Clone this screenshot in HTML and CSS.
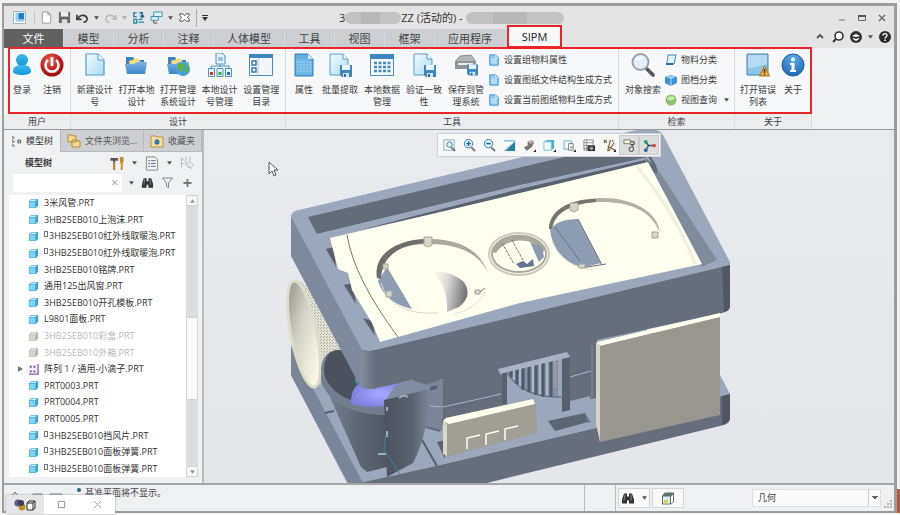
FILE: index.html
```html
<!DOCTYPE html>
<html lang="zh">
<head>
<meta charset="utf-8">
<title>SIPM</title>
<link rel="stylesheet" href="styles.css">
</head>
<body>
<svg class="defs" aria-hidden="true">
  <defs>
    <linearGradient id="gBlue" x1="0" y1="0" x2="1" y2="1"><stop offset="0" stop-color="#f4fbfe"/><stop offset="1" stop-color="#a9dbf3"/></linearGradient>
    <linearGradient id="gFolder" x1="0" y1="0" x2="0" y2="1"><stop offset="0" stop-color="#7db2e4"/><stop offset="1" stop-color="#3f86cc"/></linearGradient>
    <radialGradient id="gRed" cx=".4" cy=".3" r=".8"><stop offset="0" stop-color="#ea5a50"/><stop offset=".6" stop-color="#c01818"/><stop offset="1" stop-color="#8d0d0d"/></radialGradient>
    <radialGradient id="gInfo" cx=".5" cy=".2" r=".9"><stop offset="0" stop-color="#5aa9ea"/><stop offset="1" stop-color="#1763b4"/></radialGradient>
    <linearGradient id="gUser" x1="0" y1="0" x2="0" y2="1"><stop offset="0" stop-color="#37bdf0"/><stop offset="1" stop-color="#1597d6"/></linearGradient>
  </defs>
  <symbol id="cube" viewBox="0 0 12 12"><path d="M1 3.500 3.500 1H11v7.500L8.500 11H1z" fill="#3b9fd0"/><path d="M1.500 3.800H8v6.700H1.500z" fill="#7fd3f3"/><path d="M2 3.200 3.800 1.500h6L8.300 3.200z" fill="#c4eefb"/></symbol>
  <symbol id="cubeoff" viewBox="0 0 12 12"><path d="M1 3.500 3.500 1H11v7.500L8.500 11H1z" fill="#b9b7ad"/><path d="M1.500 3.800H8v6.700H1.500z" fill="#d8d6cc"/><path d="M2 3.200 3.800 1.500h6L8.300 3.200z" fill="#eceae4"/></symbol>
  <symbol id="page" viewBox="0 0 24 24"><path d="M3 1h12l6 6v15H3z" fill="url(#gBlue)" stroke="#5a9cc4" stroke-width="1.200"/><path d="M15 1v6h6" fill="#fff" stroke="#5a9cc4"/></symbol>
  <symbol id="disk" viewBox="0 0 12 12"><path d="M0 0h12v12H2L0 10z" fill="#3c86bd"/><path d="M2 0h8v5H2z" fill="#e8f4fb"/><path d="M3 8h6v4H3z" fill="#d4e6f2"/><path d="M4 9h2v3H4z" fill="#2b6ea6"/></symbol>
  <symbol id="folder" viewBox="0 0 24 24"><path d="M2 4h7l2 3h9v6H2z" fill="#3f83c4"/><path d="m5 8 9-3 4 6-12 2z" fill="#f6dd78"/><path d="M1 11h9l3-2h10l-2 12H3z" fill="url(#gFolder)"/></symbol>
  <symbol id="mini" viewBox="0 0 12 14"><path d="M1 1h7l3 3v9H1z" fill="#8fcdf4" stroke="#3c8ecb"/><path d="M8 1v3h3M3 6h6M3 8h6M3 10h6" fill="none" stroke="#d8f0fd"/></symbol>
  <symbol id="binoc" viewBox="0 0 14 12"><path d="M3 1h3v3h2V1h3l2 6v4H8V8H6v3H1V7z" fill="#333"/><path d="m4 2-1 6M10 2v6" stroke="#888"/></symbol>
  <symbol id="caret" viewBox="0 0 6 4"><path d="M0 0h6L3 4z" fill="#555"/></symbol>
</svg>

<div class="window">
  <header class="titlebar">
    <div class="quick">
      <button class="qb app" aria-label="窗口"><svg viewBox="0 0 14 14"><path d="M.5.5h13v13H.5z" fill="#fff" stroke="#9ab"/><path d="M3 2h9v9H3z" fill="#1784c7"/><path d="M3 2h3v9H3zM3 9h9v2H3z" fill="#9bd0ee"/></svg></button>
      <button class="qb" aria-label="新建"><svg viewBox="0 0 14 14"><path d="M2.500 1h6l3 3v9h-9z" fill="#fff" stroke="#999"/><path d="M8.500 1v3h3" fill="none" stroke="#888"/></svg></button>
      <button class="qb" aria-label="保存"><svg viewBox="0 0 14 14"><path d="M1 1h12v12H1z" fill="#666"/><path d="M3 1h8v5H3z" fill="#eee"/><path d="M4 9h6v4H4z" fill="#ddd"/></svg></button>
      <button class="qb" aria-label="撤消"><svg viewBox="0 0 14 14"><path d="M2 8c3-5 9-4 10 0 .5 3-2 4-4 4M1 4v5h5" fill="none" stroke="#3c3c3c" stroke-width="1.800"/></svg></button>
      <svg class="caret"><use href="#caret"/></svg>
      <button class="qb faded" aria-label="重做"><svg viewBox="0 0 14 14"><path d="M12 8c-3-5-9-4-10 0-.5 3 2 4 4 4M13 4v5H8" fill="none" stroke="#777" stroke-width="1.600"/></svg></button>
      <svg class="caret faded"><use href="#caret"/></svg>
      <button class="qb" aria-label="重新生成"><svg viewBox="0 0 14 14"><path d="M2 1v6M2 2h3M2 6h3M2 9h3v4H2zM7 12h6M7 9h4" fill="none" stroke="#2485aa" stroke-width="1.500"/><path d="M8 2h3v5M9 5l2 2 2-2" fill="none" stroke="#1d6d94" stroke-width="1.600"/></svg></button>
      <button class="qb" aria-label="窗口切换"><svg viewBox="0 0 14 14"><path d="M4 1h9v5H4zM1 6h8v4H1z" fill="#dff1fa" stroke="#3d8cae"/><path d="M4 10v3h4" fill="none" stroke="#444"/></svg></button>
      <svg class="caret"><use href="#caret"/></svg>
      <button class="qb" aria-label="关闭"><svg viewBox="0 0 14 14"><path d="M2 3h3l2 2 2-2h3v2l-2 2 2 2v2H9L7 9l-2 2H2V9l2-2-2-2z" fill="#fff" stroke="#444"/></svg></button>
      <span class="qsep"></span>
      <svg class="caret more" viewBox="0 0 6 6"><path d="M0 0h6v1H0zM0 2h6L3 6z" fill="#333"/></svg>
    </div>
    <div class="caption"><span>3</span><i class="mask short"></i><span>ZZ (活动的) -</span><i class="mask long"></i></div>
    <div class="wincontrols">
      <button aria-label="最小化"><svg viewBox="0 0 10 10"><path d="M2 7h6" stroke="#777"/></svg></button>
      <button aria-label="最大化"><svg viewBox="0 0 10 10"><path d="M1.500 2.500h7v5h-7z" fill="none" stroke="#666"/><path d="M1 2h8v2H1z" fill="#555"/></svg></button>
      <button aria-label="关闭窗口"><svg viewBox="0 0 10 10"><path d="m2 2 6 6M8 2 2 8" stroke="#666" stroke-width="1.400"/></svg></button>
    </div>
  </header>

  <nav class="tabs">
    <div class="tablist">
      <button class="tab file">文件</button><button class="tab w50">模型</button><button class="tab w50">分析</button><button class="tab w50">注释</button><button class="tab w71">人体模型</button><button class="tab w50">工具</button><button class="tab w50">视图</button><button class="tab w50">框架</button><button class="tab w71">应用程序</button>
    </div>
    <button class="tab current">SIPM</button>
    <div class="tools">
      <button aria-label="折叠"><svg viewBox="0 0 12 12"><path d="m3 7 3-3 3 3" fill="none" stroke="#555" stroke-width="1.800"/></svg></button>
      <button aria-label="搜索"><svg viewBox="0 0 12 12"><circle cx="7" cy="5" r="4" fill="#fff" stroke="#333" stroke-width="1.600"/><path d="m4 8-3 3" stroke="#333" stroke-width="2"/></svg></button>
      <button aria-label="学习"><svg viewBox="0 0 12 12"><circle cx="6" cy="6" r="6" fill="#333"/><path d="m2 5 4-2 4 2-4 1zM3 7l3 1 3-1v1L6 10 3 8z" fill="#fff"/></svg></button>
      <svg class="caret"><use href="#caret"/></svg>
      <button aria-label="帮助"><svg viewBox="0 0 12 12"><circle cx="6" cy="6" r="6" fill="#2c2c2c"/><path d="M4 4.500C4 2 8 2 8 4.500 8 6 6 6 6 7.500" fill="none" stroke="#fff" stroke-width="1.400"/><path d="M5.300 8.500h1.500V10H5.300z" fill="#fff"/></svg></button>
    </div>
  </nav>

  <section class="ribbon">
    <div class="group">
      <div class="items">
        <button class="big narrow"><svg viewBox="0 0 24 24"><circle cx="12" cy="7" r="6" fill="url(#gUser)"/><path d="M3 19c0-5 3-6 6-7h6c3 1 6 2 6 7-1 4-17 4-18 0z" fill="url(#gUser)"/></svg><span>登录</span></button>
        <button class="big narrow"><svg viewBox="0 0 24 24"><circle cx="12" cy="12" r="11.500" fill="url(#gRed)"/><path d="M8 7a6.500 6.500 0 1 0 8 0" fill="none" stroke="#fff" stroke-width="2.600"/><path d="M12 4v9" stroke="#fff" stroke-width="2.800"/></svg><span>注销</span></button>
      </div>
      <h2>用户</h2>
    </div>
    <div class="group">
      <div class="items">
        <button class="big"><svg><use href="#page"/></svg><span>新建设计号</span></button>
        <button class="big"><svg><use href="#folder"/></svg><span>打开本地设计</span></button>
        <button class="big"><svg viewBox="0 0 24 24"><use href="#folder"/><circle cx="17" cy="16" r="7" fill="#4a9ee0"/><path d="m13 11 5-1 2 3-3 2v4l-3-1-3-4zM20 15l3-1-1 5-3 2z" fill="#5cb531"/></svg><span>打开管理系统设计</span></button>
        <button class="big"><svg viewBox="0 0 24 24"><path d="M8 0h6l3 3v8H8z" fill="#e6f5fc" stroke="#4b93bd"/><path d="M10 5h5M10 7h5M12 11v3M3 15v-2h18v2" fill="none" stroke="#4b93bd"/><path d="M.5 15.500h6v8h-6zM9 15.500h6v8H9zM17.500 15.500h6v8h-6z" fill="#e9f5fb" stroke="#4b93bd"/><path d="M2 19h3v3H2z" fill="#d33"/><path d="M10.500 19h3v3h-3z" fill="#3a3"/><path d="M19 19h3v3h-3z" fill="#36c"/></svg><span>本地设计号管理</span></button>
        <button class="big"><svg viewBox="0 0 24 24"><path d="M.5 1.500h23v21H.5z" fill="#fff" stroke="#4c8cba"/><path d="M0 1h24v4H0z" fill="#3f87c0"/><path d="M9 5v17h14V5z" fill="#f3f6f8"/><path d="M3 8h4v4H3zM3 15h4v4H3z" fill="#fff" stroke="#2f78b4" stroke-width="1.500"/><path d="M9 5v17" stroke="#a8c4d8"/></svg><span>设置管理目录</span></button>
      </div>
      <h2>设计</h2>
    </div>
    <div class="group wide">
      <div class="items">
        <button class="big narrow"><svg viewBox="0 0 24 24"><path d="M3 1h13l5 5v17H3z" fill="#62afe2" stroke="#2f7db8"/><path d="M16 1v5h5" fill="#d5ecf9"/><path d="M6 6v15M9 6v15M12 6v15M15 6v15M18 8v13M4 9h16M4 12h16M4 15h16M4 18h16" stroke="#a7d6f3" stroke-width=".7"/></svg><span>属性</span></button>
        <button class="big"><svg viewBox="0 0 24 24"><path d="M2 1h13l5 5v16H2z" fill="url(#gBlue)" stroke="#5a9cc4"/><path d="M15 1v5h5" fill="#fff" stroke="#5a9cc4"/><use href="#disk" x="12" y="12" width="12" height="12"/></svg><span>批量提取</span></button>
        <button class="big"><svg viewBox="0 0 24 24"><path d="M.5 1.500h23v21H.5z" fill="#f3fafe" stroke="#4c8cba"/><path d="M0 1h24v5H0z" fill="#3f87c0"/><path d="M4 10h17M4 14h17M4 18h17" stroke="#4689bb" stroke-width="2.600" stroke-dasharray="3 1.500"/></svg><span>本地数据管理</span></button>
        <button class="big"><svg viewBox="0 0 24 24"><path d="M2 1h13l5 5v16H2z" fill="url(#gBlue)" stroke="#5a9cc4"/><path d="M15 1v5h5" fill="#fff" stroke="#5a9cc4"/><use href="#disk" x="12" y="12" width="12" height="12"/></svg><span>验证一致性</span></button>
        <button class="big"><svg viewBox="0 0 24 24"><path d="m6 3 11-1 5 7H1z" fill="#b5b7b9" stroke="#8b8d8f"/><path d="M1 8h21v8H1z" fill="#929598"/><path d="M4 11h15" stroke="#ececec" stroke-width="2"/><use href="#disk" x="13" y="11" width="11" height="12"/></svg><span>保存到管理系统</span></button>
        <div class="stack">
          <button class="small"><svg><use href="#mini"/></svg>设置组物料属性</button>
          <button class="small"><svg><use href="#mini"/></svg>设置图纸文件结构生成方式</button>
          <button class="small"><svg><use href="#mini"/></svg>设置当前图纸物料生成方式</button>
        </div>
      </div>
      <h2>工具</h2>
    </div>
    <div class="group search">
      <div class="items">
        <button class="big"><svg viewBox="0 0 24 24"><path d="m15 15 7 7" stroke="#555" stroke-width="3.600" stroke-linecap="round"/><circle cx="9.500" cy="9" r="8" fill="#e3eefa" stroke="#9aa0a8" stroke-width="2"/><path d="M5 8c1-3 4-4 7-3" fill="none" stroke="#fff" stroke-width="2"/></svg><span>对象搜索</span></button>
        <div class="stack">
          <button class="small"><svg viewBox="0 0 12 12"><path d="M3 1h8L9 10H1c1 0 1-1 2-9z" fill="#e2f3fc" stroke="#3588bd"/><path d="M1 10h7" stroke="#266d9c" stroke-width="2"/></svg>物料分类</button>
          <button class="small"><svg viewBox="0 0 12 12"><path d="m0 3 6-2 6 2v6l-6 3-6-3z" fill="#3c93d4"/><path d="m1 3 5-1.500L11 3 6 5z" fill="#9dd1f5"/><path d="M6 5v7" stroke="#bfe2fa"/></svg>图档分类</button>
          <button class="small"><svg viewBox="0 0 12 12"><circle cx="6" cy="6" r="5.500" fill="#8bc76a"/><path d="M2 5c1-3 5-4 8-1L6 7z" fill="#cdebb7"/></svg>视图查询<svg class="caret"><use href="#caret"/></svg></button>
        </div>
      </div>
      <h2>检索</h2>
    </div>
    <div class="group about">
      <div class="items">
        <button class="big"><svg viewBox="0 0 24 24"><path d="M1 1h21v21H1z" fill="#8fc4ea" stroke="#4a82ac"/><path d="M2 2h19v9L2 16z" fill="#b5daf3"/><path d="m18.500 13 5 10h-10z" fill="#f0b22c" stroke="#a87416"/><path d="M18.500 16v4M18.500 21v1" stroke="#333" stroke-width="1.500"/></svg><span>打开错误列表</span></button>
        <button class="big narrow"><svg viewBox="0 0 24 24"><circle cx="12" cy="12" r="11" fill="url(#gInfo)" stroke="#1f5e9d"/><circle cx="12" cy="6.500" r="2" fill="#fff"/><path d="M9 10h4.500v7H15v2H9v-2h1.500v-5H9z" fill="#fff"/></svg><span>关于</span></button>
      </div>
      <h2>关于</h2>
    </div>
    <div class="highlight"></div>
  </section>

  <main class="work">
    <aside class="side">
      <div class="sidetabs">
        <button class="on"><svg viewBox="0 0 12 12"><path d="M2 0v12M2 2h3M2 6h3M2 11h3" stroke="#555" stroke-dasharray="2 1"/><path d="M7.500 4.500h3v3h-3z" fill="none" stroke="#444"/></svg>模型树</button>
        <button><svg class="lg" viewBox="0 0 14 14"><path d="M1 1h4l1 1h3v6H1zM5 6h4l1 1h3v6H5z" fill="#f5d98c" stroke="#b3893a"/></svg>文件夹浏览...</button>
        <button><svg class="lg" viewBox="0 0 14 14"><path d="M1 2h5l1 1h6v10H1z" fill="#f5dea0" stroke="#b89344"/><path d="M4 8h6M7 5v6M5 6l4 4M9 6l-4 4" stroke="#2676a8" stroke-width="1.200"/></svg>收藏夹</button>
      </div>
      <div class="treehead">
        <h3>模型树</h3>
        <button aria-label="设置"><svg viewBox="0 0 14 16"><path d="M0 2h8v3H5v10H3V5H0z" fill="#555"/><path d="M3 7h2v8H3z" fill="#c88a35"/><path d="M10 1v5l1 2v7h2V8l1-2V1z" fill="#c88a35"/></svg></button>
        <svg class="caret"><use href="#caret"/></svg>
        <button aria-label="显示"><svg viewBox="0 0 14 16"><path d="M1 1h9l3 3v11H1z" fill="#f2f2f2" stroke="#858585"/><path d="M3 5h2M6 5h5M3 8h2M6 8h5M3 11h2M6 11h5" stroke="#567"/></svg></button>
        <svg class="caret"><use href="#caret"/></svg>
        <button class="faded" aria-label="隐藏"><svg viewBox="0 0 14 16"><path d="M1 1v12M1 4h3M1 8h3M6 1v5M10 1v5M5 9c3-3 6-3 9 1-3 3-6 3-9-1M4 5l9 10" fill="none" stroke="#666"/></svg></button>
      </div>
      <div class="find">
        <label class="field"><input type="text" aria-label="搜索模型树"><span>×</span></label>
        <svg class="caret"><use href="#caret"/></svg>
        <button aria-label="查找"><svg><use href="#binoc"/></svg></button>
        <button aria-label="过滤"><svg viewBox="0 0 12 12"><path d="M1 1h10L7 6v5L5 9V6z" fill="none" stroke="#888"/></svg></button>
        <button aria-label="添加"><svg viewBox="0 0 12 12"><path d="M6 2v8M2 6h8" stroke="#777" stroke-width="1.800"/></svg></button>
      </div>
      <div class="tree">
        <ul>
          <li><svg><use href="#cube"/></svg>3米风管.PRT</li>
          <li><svg><use href="#cube"/></svg>3HB25EB010上泡沫.PRT</li>
          <li><svg><use href="#cube"/></svg><i></i>3HB25EB010红外线取暖泡.PRT</li>
          <li><svg><use href="#cube"/></svg><i></i>3HB25EB010红外线取暖泡.PRT</li>
          <li><svg><use href="#cube"/></svg>3HB25EB010铭牌.PRT</li>
          <li><svg><use href="#cube"/></svg>通用125出风窗.PRT</li>
          <li><svg><use href="#cube"/></svg>3HB25EB010开孔模板.PRT</li>
          <li><svg><use href="#cube"/></svg>L9801面板.PRT</li>
          <li class="off"><svg><use href="#cubeoff"/></svg>3HB25EB010彩盒.PRT</li>
          <li class="off"><svg><use href="#cubeoff"/></svg>3HB25EB010外箱.PRT</li>
          <li class="parent"><b></b><svg viewBox="0 0 12 12"><path d="M1 1h10v10H1z" fill="#f6effa"/><path d="M11 0v11H1" fill="none" stroke="#8a62ab" stroke-width="1.500"/><path d="M2 2h2v2H2zM6 2h2v2H6zM2 7h2v2H2zM6 7h2v2H6z" fill="#6d4792"/></svg>阵列 1 / 通用-小滴子.PRT</li>
          <li><svg><use href="#cube"/></svg>PRT0003.PRT</li>
          <li><svg><use href="#cube"/></svg>PRT0004.PRT</li>
          <li><svg><use href="#cube"/></svg>PRT0005.PRT</li>
          <li><svg><use href="#cube"/></svg><i></i>3HB25EB010挡风片.PRT</li>
          <li><svg><use href="#cube"/></svg><i></i>3HB25EB010面板弹簧.PRT</li>
          <li><svg><use href="#cube"/></svg><i></i>3HB25EB010面板弹簧.PRT</li>
        </ul>
        <div class="scroll">
          <button aria-label="向上"><svg class="caret up"><use href="#caret"/></svg></button>
          <div class="track"></div><div class="thumb"></div><div class="track low"></div>
          <button aria-label="向下"><svg class="caret"><use href="#caret"/></svg></button>
        </div>
      </div>
    </aside>

    <div class="viewport">
      <svg class="model" viewBox="204 130 690 353" role="img" aria-label="三维模型">
        <defs>
          <linearGradient id="dome" x1="0" y1="0" x2="1" y2=".2"><stop offset="0" stop-color="#fffff0"/><stop offset=".45" stop-color="#dadad6"/><stop offset="1" stop-color="#77777b"/></linearGradient>
          <linearGradient id="tube" x1="0" y1="0" x2=".5" y2="1"><stop offset="0" stop-color="#85847e"/><stop offset=".5" stop-color="#d2d1c5"/><stop offset="1" stop-color="#fbfae9"/></linearGradient>
          <linearGradient id="bucket" x1="0" y1="0" x2="1" y2="0"><stop offset="0" stop-color="#7b8697"/><stop offset=".5" stop-color="#5d6673"/><stop offset="1" stop-color="#4e5560"/></linearGradient>
          <linearGradient id="flap" x1="0" y1="0" x2="1" y2="0"><stop offset="0" stop-color="#4d545f"/><stop offset=".6" stop-color="#59616e"/><stop offset="1" stop-color="#7d8898"/></linearGradient>
          <radialGradient id="violet"><stop offset="0" stop-color="#a6aaff"/><stop offset="1" stop-color="#7f83e0"/></radialGradient>
          <linearGradient id="corner" x1="0" y1="0" x2="1" y2="0"><stop offset="0" stop-color="#858f9f"/><stop offset="1" stop-color="#666e7c"/></linearGradient>
          <pattern id="mesh" width="3" height="3" patternUnits="userSpaceOnUse"><path d="M0 0h3v3H0z" fill="#e3e2d4"/><path d="M0 0h1v1H0zM2 1h1v1H2z" fill="#aaa99d"/></pattern>
        </defs>
        <!-- base tray -->
        <path d="M291 345 308 340 600 300 720 375 730 394 600 427 440 465 362 483H347L291 375z" fill="#9ba8bc"/>
        <path d="M291 347 291 375 348 483H363z" fill="#7a8697"/>
        <path d="M360 483 440 465 600 427 730 394V418Q730 423 724 425L487 483z" fill="#666e7c"/>
        <path d="M722 396 730 394V418Q730 423 722 425z" fill="#505763"/>
        <path d="M325 413 334 411M422 440 437 466" stroke="#55606f" stroke-width="2"/>
        <!-- duct -->
        <path d="M294 281Q305 279 316 300L345 352 326 360 320 386z" fill="url(#mesh)"/>
        <ellipse cx="304" cy="334" rx="13" ry="54" transform="rotate(-11 304 334)" fill="url(#tube)" stroke="#dddccb" stroke-width="3"/>
        <!-- body behind the parts -->
        <path d="M412 375 597 330V398L500 414 443 423 440 432 425 428z" fill="#666e7c"/>
        <path d="M425 385 442 379V430L425 426z" fill="#7b8595"/>
        <path d="M430 406 443 407 501 394M570 377 591 371" fill="none" stroke="#a9b5c6"/>
        <path d="M442 379V419M592 345V398" stroke="#8692a3"/>
        <!-- bucket -->
        <path d="M321 371C321 350 338 347 347 352L395 395 390 410 387 467 367 472 361 467 326 388z" fill="url(#bucket)"/>
        <path d="M324 371C324 352 335 348 344 351L356 372V392L351 402C334 392 324 382 324 371z" fill="#4b525e"/>
        <path d="M321 371C325 392 352 406 389 406V415C352 416 326 401 321 380z" fill="#727d8d"/>
        <path d="M351 404C351 388 356 381 375 381L408 383Q416 390 409 397L387 406Q366 408 351 404z" fill="url(#violet)"/>
        <path d="M356 378 357 383" stroke="#35a6b9" stroke-width="2"/>
        <!-- grille -->
        <path d="M501 372 566 354V402L590 396V398L600 426 538 440 536 405 507 404z" fill="#9ba8bc"/>
        <path d="M507 370 558 357V397Q520 396 507 374z" fill="#8491a4"/>
        <path d="M507 372Q522 399 563 397" fill="none" stroke="#596371"/>
        <path d="M511 370V377M517 368V384M523 367V390M529 365V392M536 363V395M543 362V397M551 360V397" stroke="#515a67" stroke-width="3"/>
        <path d="M514 370V380M520 368V386M533 365V392M540 363V394M547 361V395" stroke="#aebacc" stroke-width="2"/>
        <path d="M555 361V388" stroke="#a39799" stroke-width="3"/>
        <path d="M562 356H570V410L562 412zM502 371H507V404H502z" fill="#59616e"/>
        <path d="M498 369 567 352 570 357 500 374z" fill="#a8b4c6"/>
        <path d="M548 421 585 413 588 422 555 431z" fill="#5c6572"/>
        <path d="M585 413 591 422 588 423z" fill="#707c8d"/>
        <!-- upper frame -->
        <path d="M291 216Q292 211 299 210L632 131Q657 125 663 135L730 262V268L374 351H362z" fill="#9ba8bc"/>
        <path d="M291 216V256L360 386 369 389V351L362 350z" fill="#7e8a9b"/>
        <path d="M362 350Q368 352 375 350L730 265V306Q730 311 722 313L412 380 395 384 372 389Q360 387 362 380z" fill="#666e7c"/>
        <path d="M362 350Q368 352 376 350V388Q362 391 360 384z" fill="url(#corner)"/>
        <path d="M722 267 730 265V306Q730 311 724 312z" fill="#515864"/>
        <path d="M308 217 641 139 657 167 520 185 317 234z" fill="#646b79"/>
        <path d="M317 234 520 185 648 157 652 163 360 234 330 240z" fill="#9ba8bc"/>
        <path d="M360 230 520 189 645 160 648 164 520 195z" fill="#59616e"/>
        <path d="M645 158 657 168 717 260 702 267z" fill="#7f8b9b"/>
        <path d="M645 158 657 168V174L651 170z" fill="#626b79"/>
        <path d="M326 249 334 247 336 267zM344 285 353 283 356 304zM363 318 373 321 375 336z" fill="#59616e"/>
        <!-- cover plate -->
        <path d="M330 238 360 231 520 193 648 162 702 264 520 303 380 342 372 323 352 290 348 273 338 269z" fill="#fffff0"/>
        <path d="M347 235Q354 278 398 337" fill="none" stroke="#777870"/>
        <path d="M637 166Q679 220 695 264" fill="none" stroke="#f1f0df" stroke-width="3"/>
        <path d="M387 267 412 309Q385 303 378 281z" fill="#8f9db3"/>
        <path d="M377 278C373 250 403 238 430 239 462 239 482 253 487 272 480 254 458 244 430 244 400 243 382 255 381 277z" fill="#aaa9a0"/>
        <path d="M377 278C373 251 402 239 428 239V243C398 244 382 257 381 279z" fill="#6e6f6d"/>
        <path d="M381 283Q391 316 438 313" fill="none" stroke="#d9d8ca"/>
        <path d="M433 272Q449 270 463 281 474 295 459 307L447 312Q448 287 433 272z" fill="url(#dome)"/>
        <ellipse cx="519" cy="254" rx="30" ry="21" fill="#f7f6e7" stroke="#cccbbd" stroke-width="2"/>
        <ellipse cx="519" cy="254" rx="27" ry="18" fill="#fffff0" stroke="#aaa99e" stroke-width="2"/>
        <path d="M492 252C496 231 535 228 546 249L543 252C533 236 507 237 496 253z" fill="#a9a89d"/>
        <path d="M530 242 542 247 544 257 539 262z" fill="#8c9ab0"/>
        <path d="M502 243 514 264M512 240 525 264" stroke="#777" stroke-dasharray="3 1"/>
        <path d="M516 264 523 261 527 264 533 259 534 266 520 268z" fill="#61738e"/>
        <path d="M550 230Q557 219 578 219L601 263 581 268Q553 257 550 230z" fill="#8f9db3"/>
        <path d="M578 219 602 265M581 268 606 264M555 227 580 261" fill="none" stroke="#667085"/>
        <path d="M549 229C549 206 578 198 603 198 632 198 658 211 660 233 651 210 629 202 602 202 572 202 554 212 553 228z" fill="#b2b1a7"/>
        <path d="M549 229C550 207 575 199 596 199V202C571 204 554 213 552 229z" fill="#757570"/>
        <path d="M552 241Q561 266 593 270M486 292Q474 310 454 314" fill="none" stroke="#e1e0d1"/>
        <path d="M424 237h8v8l-4 2-4-2zM570 203h8v7l-4 2-4-2zM652 232h6v6h-6zM383 264h5v5h-5zM386 291h6v6h-6zM475 290h5v4h-5zM579 264h6v4h-6z" fill="#d7d6cb" stroke="#a5a49a"/>
        <path d="m480 292 5-4" stroke="#777"/>
        <!-- flap -->
        <path d="M395 386 411 380 434 387 437 391 384 403z" fill="#818d9e"/>
        <path d="M384 400 430 389Q428 435 413 463L387 477z" fill="url(#flap)"/>
        <path d="M430 387 437 385V389L430 391z" fill="#596371"/>
        <path d="M399 398q4-4 9-1M387 407v4M387 431v6M378 454h8" fill="none" stroke="#a2adbb" stroke-width="2"/>
        <path d="M386 435 384 450 402 477" fill="none" stroke="#3688a1"/>
        <!-- terminal plate and control box -->
        <path d="M437 442 445 440V459z" fill="#59616e"/>
        <path d="M443 421 446 418 533 399 536 406 537 433 447 457 443 454z" fill="#a09e95"/>
        <path d="M443 421 446 418 533 399 535 404 449 424z" fill="#fffff0"/>
        <path d="M443 421 447 424V456L443 454z" fill="#d8d7c9"/>
        <path d="M467 449V438L480 435M486 445V434L499 431M505 440V429L518 426" fill="none" stroke="#fffff0" stroke-width="1.500"/>
        <path d="M597 342 720 313V317L600 346z" fill="#fffff0"/>
        <path d="M600 346 720 317V415L600 442z" fill="#98968f"/>
        <path d="M596 342 600 345V442L596 424z" fill="#d5d4c7"/>
        <path d="M269 162v12l3-3 2 5 2-1-2-5h4z" fill="#fff" stroke="#555"/>
      </svg>
      <div class="viewtools">
        <button aria-label="重新调整"><svg viewBox="0 0 14 14"><path d="M1 1h11v11H1z" fill="#fff" stroke="#8aa"/><circle cx="7" cy="6" r="3" fill="#e2f3fa" stroke="#27799b"/><path d="m9 9 4 4" stroke="#777" stroke-width="2"/></svg></button>
        <button aria-label="放大"><svg viewBox="0 0 14 14"><circle cx="6" cy="5" r="4.500" fill="#e2f3fa" stroke="#27799b"/><path d="M3.500 5h5M6 2.500v5" stroke="#176b91" stroke-width="1.500"/><path d="m9 9 4 4" stroke="#777" stroke-width="2"/></svg></button>
        <button aria-label="缩小"><svg viewBox="0 0 14 14"><circle cx="6" cy="5" r="4.500" fill="#e2f3fa" stroke="#27799b"/><path d="M3.500 5h5" stroke="#176b91" stroke-width="1.500"/><path d="m9 9 4 4" stroke="#777" stroke-width="2"/></svg></button>
        <button aria-label="重画"><svg viewBox="0 0 14 14"><path d="M1 1h12v12H1z" fill="#8ecbe2"/><path d="M1 3h11L1 12z" fill="#fff"/><path d="M13 3v10H3z" fill="#2a7fa0"/></svg></button>
        <button aria-label="渲染"><svg viewBox="0 0 14 14"><path d="m1 9 4-2V3l4-2 3 2-2 5-6 5z" fill="#777"/><path d="m5 3 4-2 3 2-4 2z" fill="#bbb"/><path d="M14 11v3h-3z" fill="#222"/></svg></button>
        <button aria-label="显示样式"><svg viewBox="0 0 14 14"><path d="m1 3 3-2h8v9l-3 2H1z" fill="#4aafce"/><path d="M1 3h8v9H1z" fill="#f4fcff" stroke="#7cc4da"/><path d="M14 11v3h-3z" fill="#222"/></svg></button>
        <button aria-label="已保存方向"><svg viewBox="0 0 14 14"><path d="M1 2h8v9H1z" fill="#eef9fc" stroke="#6bb3ca"/><path d="M6 5h5v7H6z" fill="#fff" stroke="#777"/><path d="M8 8h2v2H8z" fill="#888"/><path d="M14 11v3h-3z" fill="#222"/></svg></button>
        <button aria-label="视图管理器"><svg viewBox="0 0 14 14"><path d="M1 1h10v11H1zM1 4h10M1 7h10M1 10h10M4 1v11" fill="#fff" stroke="#888"/><path d="M5 7h8v6H5z" fill="#333"/><circle cx="9" cy="10" r="2" fill="#999"/></svg></button>
        <button aria-label="基准显示"><svg viewBox="0 0 14 14"><path d="m1 1 3 3M4 1 1 4M8 1 5 13M5 8l8 4M12 4l-6 9M10 1l1 2" stroke="#80613b" stroke-width="1.300"/><path d="M14 11v3h-3z" fill="#222"/></svg></button>
        <button class="on" aria-label="注释显示"><svg viewBox="0 0 14 14"><path d="M1 1h7v4H1z" fill="#fff5cf" stroke="#777"/><path d="M8 3h4v3H8M9 6l2 2-2 2" fill="none" stroke="#333"/><circle cx="9" cy="11" r="2.500" fill="#ddd" stroke="#333"/></svg></button>
        <button class="on" aria-label="旋转中心"><svg viewBox="0 0 14 14"><path d="M6 7 3 3M6 7h6M6 7l-3 5" stroke="#355" stroke-width="1.500"/><circle cx="3" cy="3" r="2" fill="#2d9470"/><circle cx="12" cy="7" r="2" fill="#ca4b48"/><circle cx="3" cy="12" r="2" fill="#2d69ab"/></svg></button>
      </div>
    </div>
  </main>

  <footer class="status">
    <div class="message">
      <svg class="modes" viewBox="0 0 64 14"><path d="M6 1 1 7h10zM24 3h9v7h-9zM41 3h12v8H41z" fill="#d7dadd" stroke="#60808f"/></svg>
      <span class="dot"></span><span>基准平面将不显示。</span>
    </div>
    <div class="cell"></div>
    <button class="sbtn" aria-label="查找对象"><svg><use href="#binoc"/></svg><svg class="caret"><use href="#caret"/></svg></button>
    <button class="sbtn" aria-label="选择几何"><svg viewBox="0 0 14 12"><path d="M1 3 4 0h9v9l-3 3H1z" fill="#5d7172"/><path d="M2 4h7v7H2z" fill="#d8f1fa"/><path d="M3 7h4v4H3z" fill="#edce4f"/><path d="m10 4 2-2v7l-2 2z" fill="#fff"/></svg></button>
    <select aria-label="选择过滤器"><option>几何</option></select>
    <svg class="grip" viewBox="0 0 10 10"><path d="M8 1h2v2H8zM5 4h2v2H5zM8 4h2v2H8zM2 7h2v2H2zM5 7h2v2H5zM8 7h2v2H8z" fill="#b5b5b5"/></svg>
  </footer>
</div>
<div class="edge"></div>
<div class="docked">
  <button class="app2" aria-label="还原"><svg viewBox="0 0 22 12"><circle cx="4" cy="4" r="3.500" fill="#555b91"/><circle cx="8" cy="8" r="3.500" fill="#bb8d2b"/><circle cx="7" cy="4" r="3" fill="#3b3c55"/><path d="m13 4 2-2h6v7l-2 2h-6zM13 4h6v7M19 4l2-2" fill="#fff" stroke="#222"/></svg></button>
  <button aria-label="最大化"><svg viewBox="0 0 10 10"><path d="M1.500 1.500h7v7h-7z" fill="none" stroke="#888"/></svg></button>
  <button aria-label="关闭"><svg viewBox="0 0 10 10"><path d="m1 1 8 8M9 1 1 9" stroke="#999"/></svg></button>
</div>
</body>
</html>
```
FILE: styles.css
```css
* { box-sizing: border-box; }
body {
  margin: 0;
  height: 100vh;
  padding: 3px 3px 2px 2px;
  background: #f3f3f3;
  color: #3c3c3c;
  font: 9px/12px "Open Sans", "Noto Sans CJK SC", sans-serif;
  position: relative;
  overflow: hidden;
}
button, input, select { font: inherit; color: inherit; margin: 0; padding: 0; border: 0; background: none; }
button { display: flex; align-items: center; justify-content: center; }
h2, h3 { margin: 0; font: inherit; }
svg { display: block; flex: none; }
.defs { position: absolute; width: 0; height: 0; }
.caret { width: 5px; height: 4px; }
.faded { opacity: .4; }

.window { height: 100%; display: flex; flex-direction: column; border: solid #9d9d9d; border-width: 3px 3px 2px 2px; background: #e4e4e4; }

.titlebar { height: 23px; flex: none; display: grid; grid-template-columns: 335px 1fr auto; align-items: center; }
.quick { display: flex; align-items: center; padding-left: 9px; gap: 5px; }
.qb svg { width: 13px; height: 13px; }
.qb.app { padding-right: 8px; border-right: 1px solid #c5c5c5; }
.qsep { width: 1px; height: 18px; background: #aaa; }
.caret.more { width: 6px; height: 6px; }
.caption { display: flex; align-items: center; font-size: 11px; color: #333; }
.mask { height: 12px; border-radius: 6px; background: linear-gradient(90deg, #c2c2c2 0 28%, #b8b8b8 28% 62%, #c4c4c4 62%); }
.mask.short { width: 56px; }
.mask.long { width: 98px; margin-left: 3px; }
.wincontrols { display: flex; gap: 10px; padding-right: 7px; }
.wincontrols svg { width: 10px; height: 10px; }

.tabs { height: 19px; flex: none; display: flex; }
.tablist { display: flex; background: #cbcfd2; width: 503px; }
.tab { font-size: 11px; color: #444; border-right: 1px solid #d5d8da; }
.tab.file { width: 60px; background: #616161; color: #fff; }
.w50 { width: 50px; }
.w71 { width: 71px; }
.tab.current { width: 55px; height: 23px; margin-top: -4px; border: 2px solid #e8232a; background: #f8f8f8; color: #222; position: relative; z-index: 2; }
.tools { margin-left: auto; display: flex; align-items: center; gap: 6px; padding: 0 3px 4px 0; }
.tools svg:not(.caret) { width: 12px; height: 12px; }

.ribbon { height: 82px; flex: none; display: flex; position: relative; background: #f0f1f2; border-bottom: 1px solid #999; }
.group { display: flex; flex-direction: column; border-right: 1px solid #d9dadc; }
.items { height: 66px; display: flex; align-items: flex-start; padding: 5px 3px 0; background: #f7f8f9; }
.group h2 { height: 15px; display: grid; place-items: center; background: #ecedef; }
.big { width: 42px; flex-direction: column; gap: 7px; line-height: 12px; }
.big.narrow { width: 30px; }
.big svg { width: 24px; height: 24px; }
.big span { width: 38px; text-align: center; word-break: break-all; }
.narrow span { width: 30px; }
.stack { display: flex; flex-direction: column; gap: 6px; padding-left: 1px; }
.small { height: 14px; justify-content: flex-start; gap: 4px; white-space: nowrap; }
.small svg:not(.caret) { width: 12px; height: 12px; }
.small .caret { margin-left: 3px; }
.group:nth-child(2) { width: 215px; }
.wide { width: 333px; }
.search { width: 116px; }
.about { width: 77px; }
.highlight { position: absolute; left: 4px; top: -1px; width: 804px; height: 67px; border: 2px solid #e8232a; pointer-events: none; }

.work { flex: 1; min-height: 0; display: flex; background: #e7e8ec; }
.side { width: 200px; display: flex; flex-direction: column; background: #f0f1f3; border-right: 2px solid #b9bcbf; }
.sidetabs { height: 22px; flex: none; display: grid; grid-template-columns: 57px 83px 1fr; }
.sidetabs button { gap: 4px; background: #ccced1; border: solid #b6b8bb; border-width: 0 1px 1px 0; white-space: nowrap; color: #555; }
.sidetabs .on { background: #f0f1f3; border-bottom: 0; color: #333; }
.sidetabs svg { width: 11px; height: 11px; }
.sidetabs .lg { width: 14px; height: 14px; }
.treehead { height: 22px; flex: none; display: flex; align-items: center; gap: 8px; padding: 0 8px 0 21px; }
.treehead h3 { margin-right: auto; font-weight: 700; }
.treehead button svg { width: 14px; height: 15px; }
.find { height: 18px; flex: none; display: flex; align-items: center; gap: 7px; padding: 0 8px 0 9px; }
.field { flex: 1; min-width: 0; height: 18px; display: flex; align-items: center; background: #fff; }
.field input { flex: 1; min-width: 0; height: 16px; outline: 0; }
.field span { padding-right: 4px; font-size: 12px; color: #999; }
.find button svg { width: 13px; height: 12px; }
.tree { flex: 1; min-height: 0; display: flex; margin: 3px 4px 6px 5px; background: #fff; }
.tree ul { flex: 1; margin: 0; padding: 0; list-style: none; display: flex; flex-direction: column; }
.tree li { flex: 1; display: flex; align-items: center; padding-left: 19px; white-space: nowrap; color: #333; }
.tree li svg { width: 11px; height: 11px; margin-right: 5px; }
.tree li i { width: 4px; height: 6px; border: 1px solid #777; margin: 0 1px 4px 0; }
.tree li.off { color: #b8b8b8; }
.tree li.parent { padding-left: 9px; }
.tree li b { border: solid transparent; border-width: 3px 0 3px 5px; border-left-color: #777; margin-right: 5px; }
.scroll { width: 12px; display: flex; flex-direction: column; background: #dcdddf; }
.scroll button { height: 11px; background: #f8f8f8; border: 1px solid #d2d2d2; }
.scroll .caret { opacity: .6; }
.caret.up { transform: rotate(180deg); }
.track { flex: 112; }
.thumb { flex: 81; background: #fafafa; border: 1px solid #d5d5d5; }
.track.low { flex: 67; }
.viewport { flex: 1; min-width: 0; position: relative; overflow: hidden; background: linear-gradient(#e9eaee, #e5e6ea); }
.model { width: 100%; height: 100%; }
.viewtools { position: absolute; top: 3px; left: 233px; display: flex; padding: 1px; background: #f8f8f9; border: 1px solid #cfd0d3; }
.viewtools button { width: 20px; height: 20px; }
.viewtools .on { background: #dcdddd; border: 1px solid #cacaca; }
.viewtools svg { width: 13px; height: 13px; }

.status { height: 28px; flex: none; display: flex; align-items: center; background: #eff0f2; border-top: 2px solid #a5a6a8; }
.message { width: 581px; height: 100%; display: flex; align-items: flex-start; gap: 4px; padding: 2px 0 0 5px; border-right: 1px solid #bbb; color: #444; }
.modes { width: 64px; height: 14px; margin-top: 4px; }
.dot { width: 4px; height: 4px; margin-top: 1px; border-radius: 50%; background: #28677c; }
.cell { width: 31px; height: 100%; border-right: 1px solid #bbb; }
.sbtn { width: 32px; height: 20px; gap: 7px; margin-left: 2px; background: #f9f9f9; border: 1px solid #d4d4d4; }
.sbtn svg:not(.caret) { width: 14px; height: 13px; }
.status select {
  margin-left: auto; width: 129px; height: 18px; padding-left: 5px; appearance: none; border: 1px solid #ddd; border-radius: 0;
  background: linear-gradient(#ccc, #ccc) right 11px top / 1px 100% no-repeat, linear-gradient(to top right, transparent 50%, #666 50%) right 5px center / 3px 4px no-repeat, linear-gradient(to top left, transparent 50%, #666 50%) right 2px center / 3px 4px no-repeat, #fafafa;
}
.grip { width: 10px; height: 10px; margin: 12px 2px 0 1px; }
.edge { position: absolute; right: 0; bottom: 2px; width: 3px; height: 24px; background: #b95443; }
.docked { position: absolute; left: 6px; bottom: 1px; width: 109px; height: 19px; display: grid; grid-template-columns: 38px 35px 36px; background: #fff; box-shadow: 0 0 2px #999; }
.docked .app2 { background: #e6e6e6; }
.docked svg { width: 9px; height: 9px; }
.docked .app2 svg { width: 22px; height: 12px; }
```
